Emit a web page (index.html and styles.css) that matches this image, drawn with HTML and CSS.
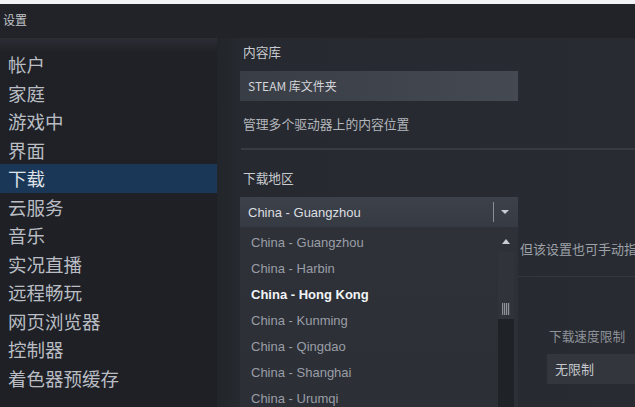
FILE: index.html
```html
<!DOCTYPE html>
<html lang="zh-CN">
<head>
  <meta charset="UTF-8">
  <title>设置</title>
  <link rel="stylesheet" href="styles.css">
</head>
<body>
  <div class="top-strip"></div>
  <div class="titlebar">设置</div>

  <div class="main">
    <ul class="sidebar">
      <li>帐户</li>
      <li>家庭</li>
      <li>游戏中</li>
      <li>界面</li>
      <li class="active">下载</li>
      <li>云服务</li>
      <li>音乐</li>
      <li>实况直播</li>
      <li>远程畅玩</li>
      <li>网页浏览器</li>
      <li>控制器</li>
      <li>着色器预缓存</li>
    </ul>

    <div class="content">
      <div class="label">内容库</div>
      <div class="btn">STEAM 库文件夹</div>
      <div class="desc">管理多个驱动器上的内容位置</div>

      <div class="divider"></div>

      <div class="label label-region">下载地区</div>
      <div class="select">
        <span>China - Guangzhou</span>
        <span class="select-arrow"></span>
      </div>

      <div class="region-row">
        <!-- open dropdown -->
        <div class="dropdown">
          <ul class="options">
            <li>China - Guangzhou</li>
            <li>China - Harbin</li>
            <li class="current">China - Hong Kong</li>
            <li>China - Kunming</li>
            <li>China - Qingdao</li>
            <li>China - Shanghai</li>
            <li>China - Urumqi</li>
          </ul>
          <div class="scrollbar">
            <span class="scroll-up"></span>
            <div class="thumb"><span class="grip"></span></div>
            <div class="track"></div>
          </div>
        </div>

        <div class="region-side">
          <div class="desc-region">但该设置也可手动指定。</div>
          <div class="divider divider-limit"></div>
          <div class="limit">
            <div class="label muted">下载速度限制</div>
            <div class="limit-box">无限制</div>
          </div>
        </div>
      </div>
    </div>
  </div>
</body>
</html>
```

FILE: styles.css
```css
html, body {
  margin: 0;
  padding: 0;
}

body {
  width: 635px;
  height: 407px;
  overflow: hidden;
  background: #25282e;
  font-family: "Noto Sans CJK SC", "Liberation Sans", sans-serif;
  color: #c3c6cb;
}

.top-strip {
  height: 4px;
  background: #f2f3f4;
}

.titlebar {
  height: 34px;
  padding-left: 3px;
  background: #212328;
  font-size: 12px;
  line-height: 32px;
  color: #c2c5ca;
}

.main {
  display: flex;
  height: 369px;
}

.sidebar {
  width: 217px;
  margin: 0;
  padding: 12px 0 0 0;
  list-style: none;
  background: linear-gradient(to bottom, #2b2e35 0, #1f2126 14px, #1e2025 100%);
}

.sidebar li {
  height: 28.5px;
  line-height: 28px;
  padding-left: 8px;
  font-size: 18.5px;
  color: #b9bdc3;
}

.sidebar li.active {
  background: #1b3757;
  color: #dfe3e8;
}

.content {
  flex: 1;
  padding: 6px 0 0 23px;
  background: linear-gradient(to right, #222529 0, #26292f 24px, #282b31 100%);
  overflow: hidden;
}

.label {
  font-size: 12.7px;
  line-height: 16px;
  padding-left: 3px;
  color: #c8cbd0;
}

.btn {
  width: 270px;
  height: 30px;
  margin-top: 11px;
  padding-left: 8px;
  background: linear-gradient(to right, #393d45, #454952);
  font-size: 12px;
  line-height: 30px;
  color: #d2d5d9;
}

.desc {
  margin-top: 15px;
  padding-left: 3px;
  font-size: 12.8px;
  line-height: 16px;
  color: #b3b6bb;
}

.divider {
  height: 2px;
  margin: 16px 0 0 1px;
  background: #383b42;
}

.label-region {
  margin-top: 20px;
}

.select {
  display: flex;
  align-items: center;
  width: 270px;
  height: 30px;
  margin-top: 11px;
  padding-left: 8px;
  background: linear-gradient(to bottom, #3d4149, #363a42);
  font-family: "Liberation Sans", Arial, sans-serif;
  font-size: 13px;
  color: #dcdee1;
}

.select span:first-child {
  flex: 1;
}

.select-arrow {
  position: relative;
  width: 24px;
  height: 20px;
  border-left: 1px solid #8a8e95;
}

.select-arrow::after {
  content: "";
  position: absolute;
  left: 7px;
  top: 8px;
  border-left: 4px solid transparent;
  border-right: 4px solid transparent;
  border-top: 4px solid #c9ccd1;
}

.region-row {
  display: flex;
  height: 190px;
}

.dropdown {
  width: 278px;
  display: flex;
  background: linear-gradient(to bottom, #2e3138, #2c2f36);
}

.options {
  flex: 1;
  margin: 0;
  padding: 3px 0 0 0;
  list-style: none;
  font-family: "Liberation Sans", Arial, sans-serif;
  font-size: 13px;
}

.options li {
  height: 26px;
  line-height: 26px;
  padding-left: 11px;
  color: #9a9ea6;
}

.options li.current {
  color: #f2f4f6;
  font-weight: bold;
}

.scrollbar {
  width: 16px;
  margin-right: 4px;
  display: flex;
  flex-direction: column;
}

.scroll-up {
  width: 0;
  height: 0;
  margin: 12px 0 0 4px;
  border-left: 4px solid transparent;
  border-right: 4px solid transparent;
  border-bottom: 5px solid #c9ccd1;
}

.thumb {
  position: relative;
  height: 67px;
  margin-top: 8px;
  background: #30333a;
}

.grip {
  position: absolute;
  left: 4px;
  bottom: 4px;
  width: 8px;
  height: 12px;
  background: repeating-linear-gradient(to right, #a6a9ae 0 1px, transparent 1px 2px),
              #4a4d54;
  opacity: 0.8;
}

.track {
  flex: 1;
  background: #1f2227;
}

.region-side {
  flex: 1;
  min-width: 0;
}

.desc-region {
  margin: 14px 0 0 2px;
  font-size: 13px;
  line-height: 16px;
  white-space: nowrap;
  color: #9da1a8;
}

.divider-limit {
  margin: 19px 0 0 0;
  height: 1px;
  background: #33363c;
}

.limit {
  margin: 51px 0 0 29px;
}

.label.muted {
  padding-left: 2px;
  color: #8e9299;
}

.limit-box {
  height: 30px;
  margin-top: 10px;
  padding-left: 8px;
  background: #33363d;
  font-size: 13px;
  line-height: 30px;
  color: #c5c8cc;
}
```
